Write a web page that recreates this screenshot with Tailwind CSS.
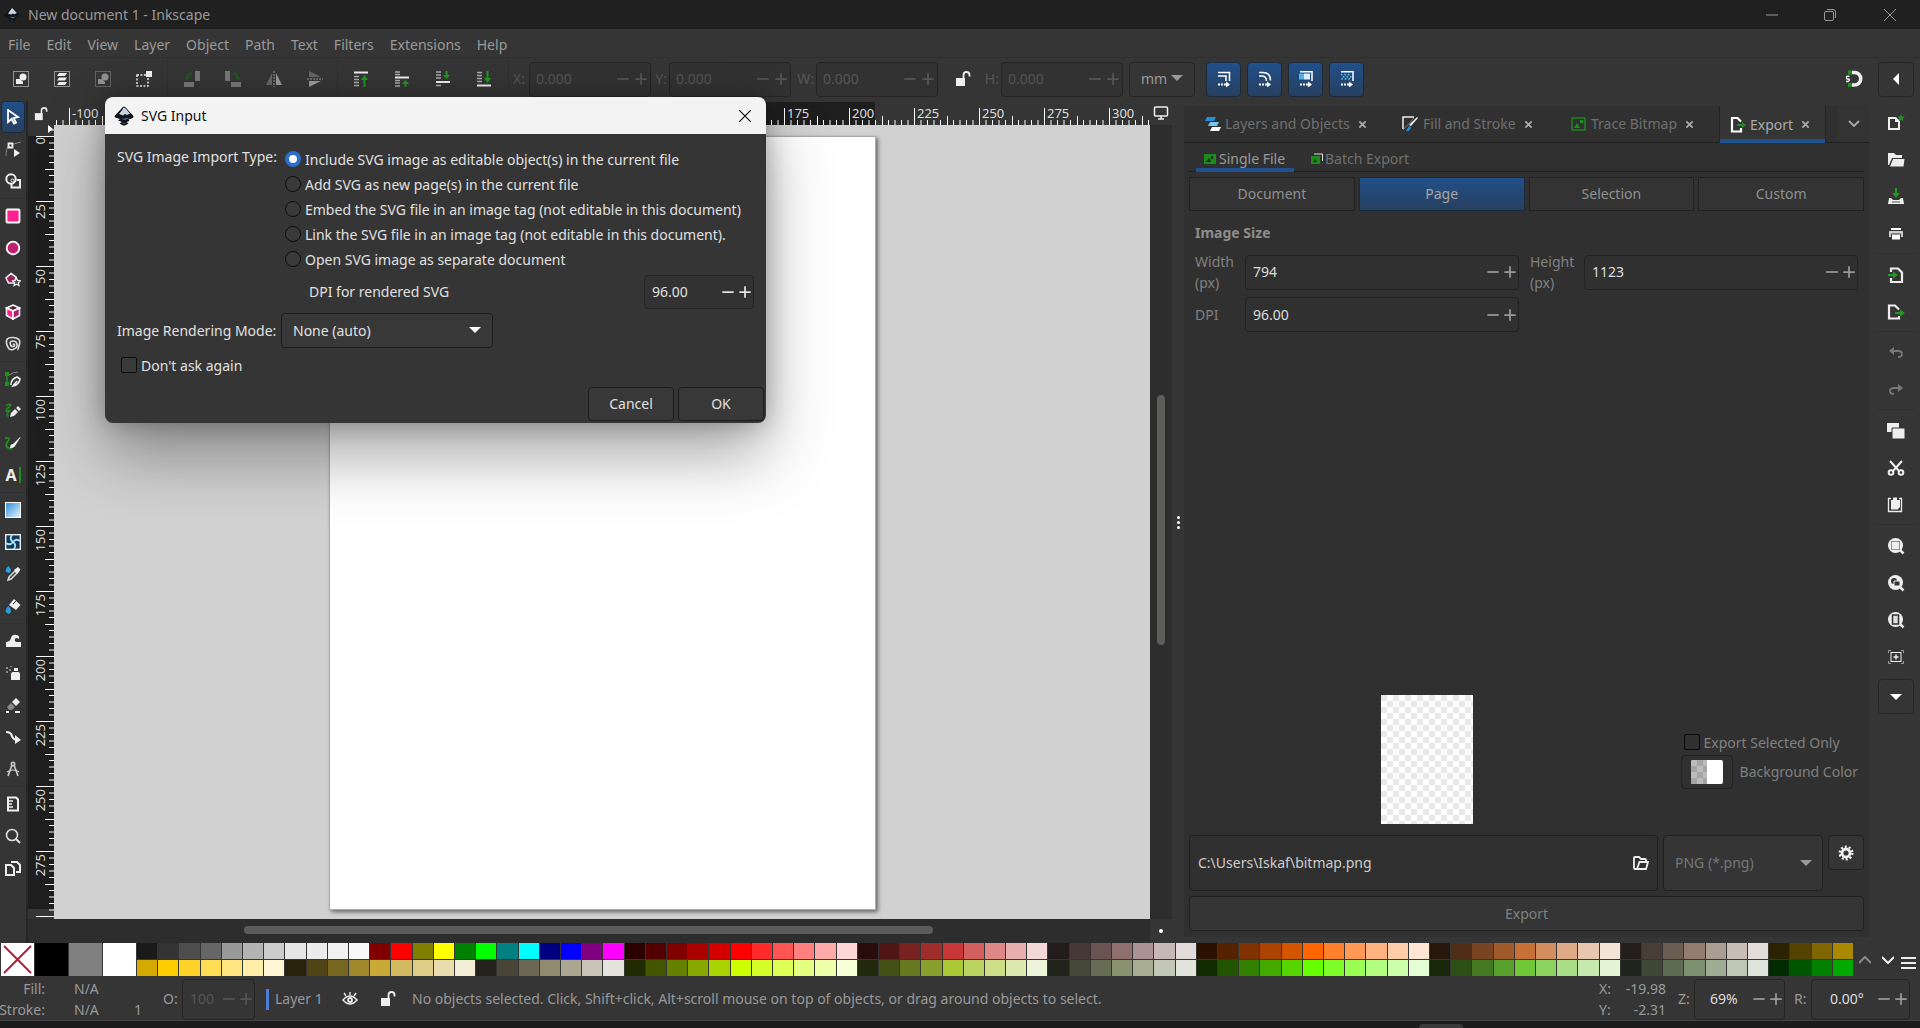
<!DOCTYPE html>
<html lang="en">
<head>
    <meta charset="UTF-8">
    <meta name="viewport" content="width=device-width, initial-scale=1.0">
    <title>New document 1 - Inkscape</title>
    <script src="https://cdn.jsdelivr.net/npm/@tailwindcss/browser@4"></script>
</head>
<body class="relative flex flex-col h-screen overflow-hidden bg-[#353535] text-[#999] font-['Noto_Sans','Open_Sans',sans-serif] text-sm leading-5">

    <!-- Shared icon shapes -->
    <svg class="hidden">
        <symbol id="minus" viewBox="0 0 16 16"><path d="M1.500 8h13" stroke="currentColor" stroke-width="2"/></symbol>
        <symbol id="plus" viewBox="0 0 16 16"><path d="M1.500 8h13M8 1.500v13" stroke="currentColor" stroke-width="2"/></symbol>
        <symbol id="caret" viewBox="0 0 12 8"><path d="M0 1h12L6 7z" fill="currentColor"/></symbol>
        <symbol id="close" viewBox="0 0 10 10"><path d="M1.500 1.500l7 7M8.500 1.500l-7 7" stroke="currentColor" stroke-width="2"/></symbol>
        <symbol id="unlock" viewBox="0 0 16 16"><path d="M1 7h9v8H1z" fill="#eee"/><path d="M8.500 8V4q0-3 3-3t3 3v1.500" fill="none" stroke="#eee" stroke-width="1.800"/></symbol>
        <symbol id="logo" viewBox="0 0 20 20">
            <path d="M10 0.500Q11.500 .8 13 3l6 6.500q1.500 2-1.500 3l-3 1 1 1.500-3 1 2 1.500-3.500 2H9l-3.500-2L8 16l-4-1.500L6 13l-3.500-1Q-.5 11 1 9.500L7.500 2.500Q9 .5 10 .5z" fill="#10141b"/>
            <path d="M10 1.500q1 0 2 1.500l4 4.500-3 1.500-2-1-2 1.500-4-1.500 3.500-4.500Q9 1.500 10 1.500z" fill="#c9d3df"/>
            <path d="M3 11q6 3 13 .5l-5 2.500z" fill="#5b7ba5"/>
            <path d="M7 16.500q3 1.500 6 0l-3 1.500z" fill="#5b7ba5"/>
        </symbol>
        <symbol id="lens" viewBox="0 0 18 18"><circle cx="8.500" cy="8.500" r="7.500" fill="#eee"/><path d="M13 13l3.500 3.500" stroke="#eee" stroke-width="2.500"/></symbol>
    </svg>

    <!-- Title bar -->
    <header class="flex items-center h-[29px] shrink-0 bg-[#202020] pl-1">
        <svg class="w-4 h-5"><use href="#logo"/></svg>
        <h1 class="ml-2 flex-1">New document 1 - Inkscape</h1>
        <button aria-label="Minimize" class="w-[58px] h-7 flex items-center justify-center"><svg class="w-3 h-3" viewBox="0 0 12 12"><path d="M0 6h12" stroke="#999"/></svg></button>
        <button aria-label="Restore" class="w-[58px] h-7 flex items-center justify-center"><svg class="w-3 h-3" viewBox="0 0 12 12" fill="none" stroke="#999"><rect x=".5" y="2.500" width="9" height="9" rx="1.500"/><path d="M3 .5h6q2.500 0 2.500 2.500v6"/></svg></button>
        <button aria-label="Close" class="w-[61px] h-7 flex items-center justify-center"><svg class="w-3 h-3" viewBox="0 0 12 12"><path d="M0 0l12 12M12 0L0 12" stroke="#999"/></svg></button>
    </header>

    <!-- Menu -->
    <nav class="flex items-center gap-4 h-7 shrink-0 px-2 pt-[3px]">
        <a href="#">File</a>
        <a href="#">Edit</a>
        <a href="#">View</a>
        <a href="#">Layer</a>
        <a href="#">Object</a>
        <a href="#">Path</a>
        <a href="#">Text</a>
        <a href="#">Filters</a>
        <a href="#">Extensions</a>
        <a href="#">Help</a>
    </nav>

    <!-- Tool options -->
    <div class="flex items-center h-[45px] shrink-0 border-t border-[#303030] pr-[6px] pb-[2px]">
        <div class="flex items-center h-full border-r border-[#303030] w-[168px]">
            <button aria-label="Select all" class="w-[41px] flex justify-center"><svg class="w-4 h-4" viewBox="0 0 16 16"><rect x=".5" y=".5" width="15" height="15" fill="none" stroke="#eee" stroke-dasharray="1 1"/><circle cx="10" cy="6" r="3.500" fill="#eee"/><path d="M3 8h4l3 3v2H3z" fill="#eee"/></svg></button>
            <button aria-label="Select all in all layers" class="w-[41px] flex justify-center"><svg class="w-4 h-4" viewBox="0 0 16 16"><rect x=".5" y=".5" width="15" height="15" fill="none" stroke="#eee" stroke-dasharray="1 1"/><path d="M5 2h8l-2 3H3zM5 6.500h8l-2 3H3zM5 11h8l-2 3H3z" fill="#eee"/></svg></button>
            <button aria-label="Deselect" class="w-[41px] flex justify-center opacity-50"><svg class="w-4 h-4" viewBox="0 0 16 16"><rect x=".5" y=".5" width="15" height="15" fill="none" stroke="#eee" stroke-dasharray="1 1"/><circle cx="10" cy="6" r="3.500" fill="#eee"/><path d="M3 8h4l3 3v2H3z" fill="#eee"/></svg></button>
            <button aria-label="Rubberband" class="w-[42px] flex justify-center"><svg class="w-4 h-4" viewBox="0 0 16 16"><rect x="1" y="4" width="11" height="11" fill="none" stroke="#eee" stroke-width="1.500" stroke-dasharray="2 1.500"/><path d="M10 0h6v6h-6z" fill="#eee"/></svg></button>
        </div>
        <div class="flex items-center h-full border-r border-[#303030] w-[170px] pl-[3px]">
            <button aria-label="Rotate left" class="w-[41px] flex justify-center"><svg class="w-4 h-4" viewBox="0 0 16 16"><path d="M0 11h10v5H0zM11 0h5v10h-5z" fill="#777"/><path d="M3 8q0-5 5-6" fill="none" stroke="#1c5c1c" stroke-width="2"/><path d="M0 6h6L3 10z" fill="#1c5c1c"/></svg></button>
            <button aria-label="Rotate right" class="w-[41px] flex justify-center"><svg class="w-4 h-4" viewBox="0 0 16 16"><path d="M6 11h10v5H6zM0 0h5v10H0z" fill="#777"/><path d="M13 8q0-5-5-6" fill="none" stroke="#1c5c1c" stroke-width="2"/><path d="M10 6h6l-3 4z" fill="#1c5c1c"/></svg></button>
            <button aria-label="Flip horizontal" class="w-[41px] flex justify-center"><svg class="w-4 h-4" viewBox="0 0 16 16"><path d="M6 2v12H0z" fill="#666"/><path d="M10 2v12h6z" fill="#999"/><path d="M8 0v16" stroke="#999" stroke-dasharray="2 1"/></svg></button>
            <button aria-label="Flip vertical" class="w-[41px] flex justify-center"><svg class="w-4 h-4" viewBox="0 0 16 16"><path d="M2 6h12L2 0z" fill="#666"/><path d="M2 10h12L2 16z" fill="#999"/><path d="M0 8h16" stroke="#999" stroke-dasharray="2 1"/></svg></button>
        </div>
        <div class="flex items-center h-full border-r border-[#303030] w-[171px] pl-[2px]">
            <button aria-label="Raise to top" class="w-[41px] flex justify-center"><svg class="w-4 h-4" viewBox="0 0 16 16"><path d="M1 1.500h14" stroke="#eee" stroke-width="2"/><path d="M1 5.500h5M1 8.500h5M1 11.500h5M1 14.500h5" stroke="#aaa" stroke-width="1.500"/><path d="M11.500 16V8" stroke="#1f9a1f" stroke-width="2"/><path d="M8 9l3.500-5L15 9z" fill="#1f9a1f"/></svg></button>
            <button aria-label="Raise" class="w-[41px] flex justify-center"><svg class="w-4 h-4" viewBox="0 0 16 16"><path d="M1 6.500h14" stroke="#eee" stroke-width="2"/><path d="M1 1h5M1 3.500h5M1 9.500h5M1 12h5M1 15h5" stroke="#aaa" stroke-width="1.500"/><path d="M11.500 16v-4" stroke="#1f9a1f" stroke-width="2"/><path d="M8 13l3.500-4 3.500 4z" fill="#1f9a1f"/></svg></button>
            <button aria-label="Lower" class="w-[41px] flex justify-center"><svg class="w-4 h-4" viewBox="0 0 16 16"><path d="M1 11h14" stroke="#eee" stroke-width="2"/><path d="M1 1h5M1 4h5M1 7h5M1 14.500h5" stroke="#aaa" stroke-width="1.500"/><path d="M11.500 0v5" stroke="#1f9a1f" stroke-width="2"/><path d="M8 4l3.500 4L15 4z" fill="#1f9a1f"/></svg></button>
            <button aria-label="Lower to bottom" class="w-[41px] flex justify-center"><svg class="w-4 h-4" viewBox="0 0 16 16"><path d="M1 14.500h14" stroke="#eee" stroke-width="2"/><path d="M1 1.500h5M1 4.500h5M1 7.500h5M1 10.500h5" stroke="#aaa" stroke-width="1.500"/><path d="M11.500 0v8" stroke="#1f9a1f" stroke-width="2"/><path d="M8 7l3.500 5L15 7z" fill="#1f9a1f"/></svg></button>
        </div>
        <div class="flex items-center text-[#555]">
            <label for="x" class="w-5 text-right pr-1">X:</label>
            <div class="flex items-center w-[122px] h-[35px] rounded border border-[#242424] bg-[#323232]">
                <input id="x" value="0.000" class="w-0 flex-1 pl-[6px] outline-none"><button aria-label="Less" class="w-[18px]"><svg class="w-[14px] h-[14px] mx-auto"><use href="#minus"/></svg></button><button aria-label="More" class="w-[18px]"><svg class="w-[14px] h-[14px] mx-auto"><use href="#plus"/></svg></button>
            </div>
            <label for="y" class="w-[18px] text-right pr-[2px]">Y:</label>
            <div class="flex items-center w-[122px] h-[35px] rounded border border-[#242424] bg-[#323232]">
                <input id="y" value="0.000" class="w-0 flex-1 pl-[6px] outline-none"><button aria-label="Less" class="w-[18px]"><svg class="w-[14px] h-[14px] mx-auto"><use href="#minus"/></svg></button><button aria-label="More" class="w-[18px]"><svg class="w-[14px] h-[14px] mx-auto"><use href="#plus"/></svg></button>
            </div>
            <label for="w" class="w-[25px] text-right pr-[2px]">W:</label>
            <div class="flex items-center w-[122px] h-[35px] rounded border border-[#242424] bg-[#323232]">
                <input id="w" value="0.000" class="w-0 flex-1 pl-[6px] outline-none"><button aria-label="Less" class="w-[18px]"><svg class="w-[14px] h-[14px] mx-auto"><use href="#minus"/></svg></button><button aria-label="More" class="w-[18px]"><svg class="w-[14px] h-[14px] mx-auto"><use href="#plus"/></svg></button>
            </div>
            <button aria-label="Lock ratio" class="w-[46px] pl-1"><svg class="w-4 h-4 mx-auto"><use href="#unlock"/></svg></button>
            <label for="h" class="w-[17px] text-right pr-[2px]">H:</label>
            <div class="flex items-center w-[122px] h-[35px] rounded border border-[#242424] bg-[#323232]">
                <input id="h" value="0.000" class="w-0 flex-1 pl-[6px] outline-none"><button aria-label="Less" class="w-[18px]"><svg class="w-[14px] h-[14px] mx-auto"><use href="#minus"/></svg></button><button aria-label="More" class="w-[18px]"><svg class="w-[14px] h-[14px] mx-auto"><use href="#plus"/></svg></button>
            </div>
        </div>
        <div class="relative ml-[6px] mr-[11px] text-[#999]">
            <select aria-label="Unit" class="appearance-none w-[66px] h-[35px] rounded border border-[#242424] bg-[#353535] pl-[11px]"><option>mm</option></select>
            <svg class="absolute right-3 top-3 w-3 h-2"><use href="#caret"/></svg>
        </div>
        <div class="flex gap-[6px]">
            <button aria-label="Scale stroke width" class="w-[35px] h-[35px] rounded border border-[#1c2a3d] bg-gradient-to-b from-[#204f8a] to-[#27405f] flex items-center justify-center"><svg class="w-4 h-4" viewBox="0 0 16 16"><path d="M2 1.500h11.500V10M2 5h8v5" fill="none" stroke="#fff" stroke-width="1.500"/><path d="M2 13.500h8" stroke="#fff" stroke-width="2" stroke-dasharray="2 1"/><path d="M10 10.500l4 3-4 3z" fill="#fff"/></svg></button>
            <button aria-label="Scale corners" class="w-[35px] h-[35px] rounded border border-[#1c2a3d] bg-gradient-to-b from-[#204f8a] to-[#27405f] flex items-center justify-center"><svg class="w-4 h-4" viewBox="0 0 16 16"><path d="M2 1.500h4q7.500 0 7.500 8M2 5h2.500q5 0 5 5" fill="none" stroke="#fff" stroke-width="1.500"/><path d="M2 13.500h8" stroke="#fff" stroke-width="2" stroke-dasharray="2 1"/><path d="M10 10.500l4 3-4 3z" fill="#fff"/></svg></button>
            <button aria-label="Move gradients" class="w-[35px] h-[35px] rounded border border-[#1c2a3d] bg-gradient-to-b from-[#204f8a] to-[#27405f] flex items-center justify-center"><svg class="w-4 h-4" viewBox="0 0 16 16"><path d="M2 .8h12V10" fill="none" stroke="#fff" stroke-width="1.500"/><path d="M1 2.500h5v6H1z" fill="#4db3ea"/><path d="M6 2.500h6v6H6z" fill="#d8eefa"/><path d="M2 13.500h8" stroke="#fff" stroke-width="2" stroke-dasharray="2 1"/><path d="M10 10.500l4 3-4 3z" fill="#fff"/></svg></button>
            <button aria-label="Move patterns" class="w-[35px] h-[35px] rounded border border-[#1c2a3d] bg-gradient-to-b from-[#204f8a] to-[#27405f] flex items-center justify-center"><svg class="w-4 h-4" viewBox="0 0 16 16"><path d="M2 .8h12V10" fill="none" stroke="#fff" stroke-width="1.500"/><path d="M2 3l3 3-3 3M5.500 3l3 3-3 3M9 3l3 3-3 3" fill="none" stroke="#5bc0f0" stroke-width="1.300" stroke-dasharray="2 1"/><path d="M2 13.500h8" stroke="#fff" stroke-width="2" stroke-dasharray="2 1"/><path d="M10 10.500l4 3-4 3z" fill="#fff"/></svg></button>
        </div>
        <button aria-label="Snapping" class="ml-auto mr-[14px]"><svg class="w-5 h-5" viewBox="0 0 20 20"><path d="M8 3.500h2.500a6 6 0 010 12.500H8" fill="none" stroke="#eee" stroke-width="3.500"/><path d="M4 1.500h4v4H4zM4 14h4v4H4z" fill="#1f8f1f"/><path d="M5.500 7.500q-3-1-3 1t2 1.500q2 1-.5 2.500H2" fill="none" stroke="#eee" stroke-width="1.400"/></svg></button>
        <button aria-label="Show snap options" class="w-9 h-[35px] rounded border border-[#242424] flex items-center justify-center"><svg class="w-2 h-3" viewBox="0 0 8 12"><path d="M7 0v12L1 6z" fill="#fff"/></svg></button>
    </div>

    <main class="flex flex-1 min-h-0">
        <!-- Toolbox -->
        <aside class="flex flex-col w-7 shrink-0 -mt-px pl-px border-r-2 border-[#262626] *:shrink-0">
            <button aria-label="Selector" class="h-8 w-6 flex items-center justify-center rounded border border-[#1c2a3d] bg-gradient-to-b from-[#204f8a] to-[#27405f]"><svg class="w-4 h-4" viewBox="0 0 16 16"><path d="M3 1l10 7-4.500 1 2.500 4.500-2 1-2.500-4.500L3 13z" fill="none" stroke="#fff" stroke-width="1.800"/></svg></button>
            <button aria-label="Node" class="h-8 w-6 flex items-center justify-center"><svg class="w-4 h-4" viewBox="0 0 16 16"><path d="M1 15Q1 7 4 4.500M7 3.500L16 1" fill="none" stroke="#888"/><path d="M3.500 2.500h4v4h-4z" fill="#353535" stroke="#eee" stroke-width="1.800"/><path d="M9 8l6 4-6 4z" fill="#eee"/></svg></button>
            <button aria-label="Shape builder" class="h-8 w-6 flex items-center justify-center"><svg class="w-4 h-4" viewBox="0 0 16 16" fill="none" stroke="#eee" stroke-width="2"><circle cx="6" cy="6" r="4.700"/><path d="M11.500 7H15v7.500H6.500V11"/><circle cx="7.500" cy="7.500" r="1.500" stroke-width="1"/></svg></button>
            <hr class="my-px border-[#303030]">
            <button aria-label="Rectangle" class="h-8 w-6 flex items-center justify-center"><svg class="w-4 h-4" viewBox="0 0 16 16"><rect x="1.500" y="1.500" width="13" height="13" rx="1" fill="#ff2090" stroke="#fff" stroke-width="1.800"/></svg></button>
            <button aria-label="Ellipse" class="h-8 w-6 flex items-center justify-center"><svg class="w-4 h-4" viewBox="0 0 16 16"><circle cx="8" cy="8" r="6.300" fill="#c02070" stroke="#fff" stroke-width="1.800"/></svg></button>
            <button aria-label="Star" class="h-8 w-6 flex items-center justify-center"><svg class="w-4 h-4" viewBox="0 0 16 16" stroke="#eee" stroke-width="1.600"><path d="M6 1.500l5 3.500-1.500 6H3.500L1 6z" fill="#9a1f5e"/><path d="M11.500 6l1.200 2.500 2.600.4-1.900 1.900.5 2.700-2.400-1.300-2.400 1.300.5-2.700-1.900-1.900 2.600-.4z" fill="#444" stroke-width="1.300"/></svg></button>
            <button aria-label="3D box" class="h-8 w-6 flex items-center justify-center"><svg class="w-4 h-4" viewBox="0 0 16 16" stroke="#fff" stroke-width="1.500"><path d="M8 1l6.500 3L8 7 1.500 4z" fill="#5a2040"/><path d="M1.500 4L8 7v8l-6.500-3.500z" fill="#ff2090"/><path d="M14.500 4L8 7v8l6.500-3.500z" fill="#b02070"/></svg></button>
            <button aria-label="Spiral" class="h-8 w-6 flex items-center justify-center"><svg class="w-4 h-4" viewBox="0 0 16 16"><path d="M8 8.500q1-1 1.500.3T8 10.500 5.300 8 8 5t4 3.500-4 5-6.300-5.500T8 1.500t6.500 6.500-2 6" fill="none" stroke="#ddd" stroke-width="1.600"/></svg></button>
            <hr class="my-px border-[#303030]">
            <button aria-label="Pen" class="h-8 w-6 flex items-center justify-center"><svg class="w-4 h-4" viewBox="0 0 16 16"><path d="M2 3v11" stroke="#1f8f1f" stroke-width="1.500"/><path d="M0 1h4v4H0zM0 11h4v4H0z" fill="#1f8f1f"/><path d="M4 4q4-3 9-3" fill="none" stroke="#888"/><path d="M6 14q0-6 6-8l3 2q-1 6-7 7l4-5" fill="none" stroke="#eee" stroke-width="1.600"/></svg></button>
            <button aria-label="Pencil" class="h-8 w-6 flex items-center justify-center"><svg class="w-4 h-4" viewBox="0 0 16 16"><path d="M1 3q3-3 5-1L2 6q-2 3 1 2l2-1-3 4q-1 2 2 2" fill="none" stroke="#1f8f1f" stroke-width="1.400"/><path d="M5 14l1-4 4-4 3 3-4 4zM11 5l2-2 3 3-2 2z" fill="#eee"/></svg></button>
            <button aria-label="Calligraphy" class="h-8 w-6 flex items-center justify-center"><svg class="w-4 h-4" viewBox="0 0 16 16"><path d="M0 3q6-1 3 3t-1 6 5 2" fill="none" stroke="#1f8f1f" stroke-width="1.800"/><path d="M5 13q0-4 3-4l7-7 .5.5L10 11q-1 2-5 2z" fill="#eee"/></svg></button>
            <button aria-label="Text" class="h-8 w-6 flex items-center justify-center text-base font-bold text-[#eee]">A<span class="ml-[2px] w-[2px] h-4 bg-[#1f8f1f]"></span></button>
            <hr class="my-px border-[#303030]">
            <button aria-label="Gradient" class="h-8 w-6 flex items-center justify-center"><span class="w-4 h-4 border border-white bg-gradient-to-br from-[#2090d8] to-[#e0f2fc]"></span></button>
            <button aria-label="Mesh" class="h-8 w-6 flex items-center justify-center"><svg class="w-4 h-4" viewBox="0 0 16 16"><rect x=".7" y=".7" width="14.600" height="14.600" fill="#123a58" stroke="#eee" stroke-width="1.400"/><path d="M8 8Q4 5 7 1M8 8q4 3 1 7M8 8Q5 12 1 9M8 8q3-4 7-1" fill="none" stroke="#a8e0ff" stroke-width="1.800"/></svg></button>
            <button aria-label="Dropper" class="h-8 w-6 flex items-center justify-center"><svg class="w-4 h-4" viewBox="0 0 16 16"><path d="M3.500 0Q7 4 5.500 6t-4 0T3.500 0z" fill="#2a9fe0"/><path d="M3 14l1-3 6-6 2 2-6 6z" fill="none" stroke="#ddd" stroke-width="1.500"/><path d="M9 4l4-3 2.500 2.500L12.500 8z" fill="#eee"/></svg></button>
            <button aria-label="Bucket" class="h-8 w-6 flex items-center justify-center"><svg class="w-4 h-4" viewBox="0 0 16 16"><path d="M3.500 8Q7 12 5.500 14.500t-4 0T3.500 8z" fill="#2a9fe0"/><path d="M9 1l6.500 6L11 12 4 7z" fill="#eee"/><path d="M8 6l3-3" stroke="#353535"/></svg></button>
            <hr class="my-px border-[#303030]">
            <button aria-label="Tweak" class="h-8 w-6 flex items-center justify-center"><svg class="w-4 h-4" viewBox="0 0 16 16"><path d="M1 14V9q4 0 5-4t6-3q3 1 2 4-3-2-4 0t1 3h5v5z" fill="#eee"/></svg></button>
            <button aria-label="Spray" class="h-8 w-6 flex items-center justify-center"><svg class="w-4 h-4" viewBox="0 0 16 16"><path d="M6 9q0-2 2-2h5q2 0 2 2v6H6zM9 3h4v3H9z" fill="#eee"/><path d="M1 2h2v2H1zM4 4h2v2H4zM1 6h2v2H1zM5 1h2v1H5z" fill="#888"/></svg></button>
            <button aria-label="Eraser" class="h-8 w-6 flex items-center justify-center"><svg class="w-4 h-4" viewBox="0 0 16 16"><path d="M7 5l4-4 4 4-4 4z" fill="#eee"/><path d="M6 6l4 4-3 3H4L2 10z" fill="#888"/><path d="M1 15h3M10 15h5" stroke="#eee" stroke-width="2"/></svg></button>
            <button aria-label="Connector" class="h-8 w-6 flex items-center justify-center"><svg class="w-4 h-4" viewBox="0 0 16 16"><path d="M1 3q5 0 6 4t6 4" fill="none" stroke="#eee" stroke-width="2.200"/><path d="M10 6l6 5-6 4z" fill="#eee"/></svg></button>
            <button aria-label="LPE" class="h-8 w-6 flex items-center justify-center"><svg class="w-4 h-4" viewBox="0 0 16 16" fill="none" stroke="#ccc" stroke-width="1.600"><path d="M7 4L3 15M9 4l4 11"/><circle cx="8" cy="3" r="1.700"/><path d="M2 11q6-4 12 0" stroke-width="1.200"/></svg></button>
            <hr class="my-px border-[#303030]">
            <button aria-label="Measure" class="h-8 w-6 flex items-center justify-center"><svg class="w-4 h-4" viewBox="0 0 16 16"><path d="M3 1.500h8l2 2v11H3z" fill="none" stroke="#eee" stroke-width="2"/><path d="M4 5h4M4 8h3M4 11h4" stroke="#eee" stroke-width="1.500"/></svg></button>
            <button aria-label="Zoom" class="h-8 w-6 flex items-center justify-center"><svg class="w-4 h-4" viewBox="0 0 16 16" fill="none" stroke="#ddd"><circle cx="7" cy="7" r="5.500" stroke-width="1.600"/><path d="M11 11l4 4" stroke-width="2.200"/></svg></button>
            <button aria-label="Pages" class="h-8 w-6 flex items-center justify-center"><svg class="w-4 h-4" viewBox="0 0 16 16" fill="none" stroke="#eee" stroke-width="2"><path d="M1 5h5l3 3v7H1z"/><path d="M6 2h6l3 3v7h-4"/></svg></button>
        </aside>

        <!-- Left ruler -->
        <div class="w-[26px] shrink-0 flex flex-col">
            <button aria-label="Lock guides" class="h-[23px] shrink-0"><svg class="w-[14px] h-[14px] mx-auto"><use href="#unlock"/></svg></button>
            <svg class="w-full flex-1 min-h-0 max-h-[794px]" font-size="13" fill="#ddd" text-anchor="end">
                <defs>
                    <pattern id="vticks" y="11" width="26" height="65" patternUnits="userSpaceOnUse">
                        <path d="M8 .5h18M17 33.500h9M21 7h5M21 13.500h5M21 20h5M21 26.500h5M21 39.500h5M21 46h5M21 52.500h5M21 59h5" stroke="#fff"/>
                    </pattern>
                </defs>
                <rect y="11" width="26" height="773" fill="#1e1e1e"/>
                <rect width="26" height="794" fill="url(#vticks)"/>
                <path d="M20 0l5 4-5 4z" fill="#fff"/>
                <text transform="translate(17 12) rotate(-90)">0</text>
                <text transform="translate(17 79) rotate(-90)">25</text>
                <text transform="translate(17 144) rotate(-90)">50</text>
                <text transform="translate(17 209) rotate(-90)">75</text>
                <text transform="translate(17 274) rotate(-90)">100</text>
                <text transform="translate(17 339) rotate(-90)">125</text>
                <text transform="translate(17 404) rotate(-90)">150</text>
                <text transform="translate(17 469) rotate(-90)">175</text>
                <text transform="translate(17 534) rotate(-90)">200</text>
                <text transform="translate(17 599) rotate(-90)">225</text>
                <text transform="translate(17 664) rotate(-90)">250</text>
                <text transform="translate(17 729) rotate(-90)">275</text>
            </svg>
            <div class="h-6 shrink-0 bg-[#2d2d2d]"></div>
        </div>

        <!-- Canvas -->
        <section class="flex-1 min-w-0 flex flex-col">
            <svg class="w-full h-[23px] shrink-0" font-size="13" fill="#ddd">
                <defs>
                    <pattern id="hticks" x="15" width="65" height="23" patternUnits="userSpaceOnUse">
                        <path d="M.5 6v17M33.500 14v9M7 18v5M13.500 18v5M20 18v5M26.500 18v5M39.500 18v5M46 18v5M52.500 18v5M59 18v5" stroke="#fff"/>
                    </pattern>
                </defs>
                <rect x="275" width="546" height="23" fill="#1e1e1e"/>
                <rect width="100%" height="23" fill="url(#hticks)"/>
                <text x="18" y="16">-100</text>
                <text x="733" y="16">175</text>
                <text x="798" y="16">200</text>
                <text x="863" y="16">225</text>
                <text x="928" y="16">250</text>
                <text x="993" y="16">275</text>
                <text x="1058" y="16">300</text>
            </svg>
            <div class="relative flex-1 min-h-0 overflow-hidden bg-[#d1d1d1]">
                <div class="absolute left-[275px] top-[11px] w-[547px] h-[774px] bg-white border border-[#aaa] shadow-[2px_2px_4px_rgba(0,0,0,0.5)]"></div>
            </div>
            <div class="h-6 shrink-0 bg-[#2d2d2d] pt-[7px] pl-[190px]"><div class="w-[689px] h-2 rounded-full bg-[#5c5c5a]"></div></div>
        </section>

        <!-- Vertical scrollbar -->
        <div class="w-[22px] shrink-0 flex flex-col items-center">
            <button aria-label="Color managed view" class="h-[23px] shrink-0"><svg class="w-4 h-4" viewBox="0 0 16 16"><rect x="1.500" y="1" width="13" height="9" rx="1" fill="none" stroke="#eee" stroke-width="1.500"/><path d="M8 10v3M5 13h6" stroke="#eee" stroke-width="1.500"/></svg></button>
            <div class="flex-1 w-full bg-[#2d2d2d] pt-[270px]"><div class="w-2 h-[250px] mx-auto rounded-full bg-[#5c5c5a]"></div></div>
            <div class="h-6 flex items-center"><span class="w-1 h-1 rounded-full bg-white"></span></div>
        </div>
        <div class="w-3 shrink-0 flex flex-col items-center justify-center gap-[2px]">
            <span class="w-[3px] h-[3px] rounded-full bg-white"></span>
            <span class="w-[3px] h-[3px] rounded-full bg-white"></span>
            <span class="w-[3px] h-[3px] rounded-full bg-white"></span>
        </div>

        <!-- Export dialog -->
        <section class="w-[685px] shrink-0 mt-1 mb-[6px] bg-[#303030] flex flex-col">
            <div class="flex h-[37px] shrink-0 border-b border-[#202020] text-[#6f6f6f]">
                <button class="flex items-center w-[197px] pl-5"><svg class="w-[18px] h-4 mr-[3px]" viewBox="0 0 18 16"><path d="M3 1h9l-2 4H1z" fill="#1e90d8"/><path d="M6 6h9l-2 4H4z" fill="#7cc4ee"/><path d="M8 11h9l-2 4H6z" fill="#fff"/></svg>Layers and Objects<svg class="w-[9px] h-[9px] ml-2 text-[#aaa]"><use href="#close"/></svg></button>
                <button class="flex items-center w-[168px] pl-5"><svg class="w-[18px] h-4 mr-1" viewBox="0 0 18 16"><path d="M13 1H2v12" fill="none" stroke="#eee" stroke-width="1.500"/><path d="M2 14L13 2" stroke="#777"/><path d="M16 1l1 1-7 8-2-1z" fill="#eee"/><path d="M8 10l2 1q-1 5-5 4z" fill="#1e90d8"/></svg>Fill and Stroke<svg class="w-[9px] h-[9px] ml-2 text-[#aaa]"><use href="#close"/></svg></button>
                <button class="flex items-center w-[170px] pl-[22px]"><svg class="w-4 h-4 mr-1" viewBox="0 0 16 16"><rect x="1" y="2" width="13" height="12" fill="none" stroke="#1f8f1f" stroke-width="1.300"/><path d="M3 12l3-5 3 5zM9 4h3v3H9z" fill="#1f8f1f"/></svg>Trace Bitmap<svg class="w-[9px] h-[9px] ml-2 text-[#aaa]"><use href="#close"/></svg></button>
                <button class="flex items-center w-[107px] pl-[9px] h-[37px] bg-[#353535] border-x border-[#242424] shadow-[inset_0_-4px_0_#1f5090] text-[#aaa] shrink-0"><svg class="w-[18px] h-[18px] mr-[3px]" viewBox="0 0 18 18"><path d="M12 12v3.500H3V2h5.500L12 5.500" fill="none" stroke="#fff" stroke-width="2.200"/><path d="M8 9h6" stroke="#1f8f1f" stroke-width="2"/><path d="M13 6l4 3-4 3z" fill="#1f8f1f"/></svg>Export<svg class="w-[9px] h-[9px] ml-2"><use href="#close"/></svg></button>
                <button aria-label="More tabs" class="flex items-center justify-center w-[31px] ml-auto bg-[#333]"><svg class="w-3 h-2" viewBox="0 0 12 8"><path d="M1 1l5 5 5-5" fill="none" stroke="#aaa" stroke-width="1.800"/></svg></button>
            </div>
            <div class="flex h-[29px] shrink-0 mx-[5px] px-[7px] border-b border-[#202020] text-[#6f6f6f]">
                <button class="flex items-center w-[98px] h-[29px] pt-[3px] px-2 shadow-[inset_0_-4px_0_#1f5090] text-[#999] whitespace-nowrap"><svg class="w-3 h-[10px] mr-[3px] shrink-0" viewBox="0 0 12 10"><path d="M0 0h12v10H0z" fill="#1b8c1b"/><path d="M2 8l3-4 2 4zM7 2h2v3H7z" fill="#222"/></svg>Single File</button>
                <button class="flex items-center pt-[3px] ml-[17px] whitespace-nowrap"><svg class="w-3 h-3 mr-[2px] shrink-0" viewBox="0 0 12 12"><path d="M3 1h8.500v7" fill="none" stroke="#ddd"/><path d="M0 3h9v8H0z" fill="#1b8c1b"/><path d="M2 9l2-3 2 3z" fill="#222"/></svg>Batch Export</button>
            </div>
            <div class="grid grid-cols-4 gap-1 mx-[5px] mt-[5px] shrink-0 text-[#909090]">
                <button class="h-[34px] border border-[#222] bg-[#333]">Document</button>
                <button class="h-[34px] border border-[#1c2a3d] bg-gradient-to-b from-[#204f8a] to-[#27405f] text-[#a5a5a5]">Page</button>
                <button class="h-[34px] border border-[#222] bg-[#333]">Selection</button>
                <button class="h-[34px] border border-[#222] bg-[#333]">Custom</button>
            </div>
            <h2 class="mt-3 ml-[11px] font-bold text-[#8c8c8c]">Image Size</h2>
            <div class="grid grid-cols-[50px_274px_54px_274px] items-center gap-y-1 mt-2 ml-[11px] text-[#808080]">
                <label for="width" class="leading-[21px] pr-2">Width (px)</label>
                <div class="flex items-center h-[35px] rounded border border-[#222] text-[#999]">
                    <input id="width" value="794" class="w-0 flex-1 pl-[7px] outline-none text-[#ddd]"><button aria-label="Less" class="w-[17px]"><svg class="w-[14px] h-[14px] mx-auto"><use href="#minus"/></svg></button><button aria-label="More" class="w-[17px]"><svg class="w-[14px] h-[14px] mx-auto"><use href="#plus"/></svg></button>
                </div>
                <label for="height" class="leading-[21px] pl-[11px]">Height (px)</label>
                <div class="flex items-center h-[35px] rounded border border-[#222] text-[#999] ml-[11px] -mr-[11px]">
                    <input id="height" value="1123" class="w-0 flex-1 pl-[7px] outline-none text-[#ddd]"><button aria-label="Less" class="w-[17px]"><svg class="w-[14px] h-[14px] mx-auto"><use href="#minus"/></svg></button><button aria-label="More" class="w-[17px]"><svg class="w-[14px] h-[14px] mx-auto"><use href="#plus"/></svg></button>
                </div>
                <label for="dpi">DPI</label>
                <div class="flex items-center h-[35px] rounded border border-[#222] text-[#999]">
                    <input id="dpi" value="96.00" class="w-0 flex-1 pl-[7px] outline-none text-[#ddd]"><button aria-label="Less" class="w-[17px]"><svg class="w-[14px] h-[14px] mx-auto"><use href="#minus"/></svg></button><button aria-label="More" class="w-[17px]"><svg class="w-[14px] h-[14px] mx-auto"><use href="#plus"/></svg></button>
                </div>
            </div>
            <div class="flex mt-auto mb-[11px] pl-[197px] pr-[11px]">
                <svg class="w-[92px] h-[129px] bg-white"><defs><pattern id="checks" width="12" height="12" patternUnits="userSpaceOnUse"><path d="M0 0h6v6H0zM6 6h6v6H6z" fill="#e9e9e9"/></pattern></defs><rect width="92" height="129" fill="url(#checks)"/></svg>
                <div class="ml-auto mt-9 text-[#808080]">
                    <label class="flex items-center gap-1 pl-[3px] h-6"><input type="checkbox" class="appearance-none w-4 h-4 mb-[2px] rounded-xs border border-[#080808] bg-[#303030]">Export Selected Only</label>
                    <div class="flex items-center gap-[7px]">
                        <button id="bg" class="w-[52px] h-[34px] rounded border border-[#222] flex items-center justify-center"><svg class="w-8 h-6 rounded-xs bg-white" viewBox="0 0 32 24"><path d="M0 0h16v24H0z" fill="#bbb"/><path d="M6 0h6v6H6zM0 6h6v6H0zM12 6h4v6h-4zM6 12h6v6H6zM0 18h6v6H0zM12 18h4v6h-4z" fill="#a5a5a5"/></svg></button>
                        <label for="bg">Background Color</label>
                    </div>
                </div>
            </div>
            <div class="flex gap-[5px] mx-[5px] items-start">
                <div class="flex-1 flex items-center h-14 rounded border border-[#202020] pr-2">
                    <input aria-label="File name" value="C:\Users\Iskaf\bitmap.png" class="flex-1 pl-2 outline-none text-[#ccc]">
                    <button aria-label="Browse"><svg class="w-4 h-4" viewBox="0 0 16 16" fill="none" stroke="#eee" stroke-width="1.800"><path d="M4 14H2q-1 0-1-1V3q0-1 1-1h4l2 2h4q1 0 1 1v2M4 14l2.500-7H15l-2 7z"/></svg></button>
                </div>
                <div class="relative text-[#777]">
                    <select aria-label="Format" class="appearance-none w-[160px] h-14 rounded border border-[#202020] bg-[#353535] pl-[11px]"><option>PNG (*.png)</option></select>
                    <svg class="absolute right-[11px] top-6 w-3 h-2 text-[#999]"><use href="#caret"/></svg>
                </div>
                <button aria-label="Export settings" class="w-9 h-[35px] rounded border border-[#222] bg-[#353535] flex items-center justify-center"><svg class="w-4 h-4" viewBox="0 0 16 16"><circle cx="8" cy="8" r="4" fill="none" stroke="#eee" stroke-width="2.800"/><circle cx="8" cy="8" r="6.300" fill="none" stroke="#eee" stroke-width="2.400" stroke-dasharray="2 1.958"/></svg></button>
            </div>
            <button class="h-[35px] mx-[5px] mt-[5px] mb-[6px] shrink-0 rounded border border-[#202020] bg-[#353535] text-[#808080]">Export</button>
        </section>

        <!-- Commands bar -->
        <aside class="flex flex-col items-center w-[51px] shrink-0 pt-[2px] pl-[2px] *:shrink-0">
            <button aria-label="New" class="h-[37px]"><svg class="w-[18px] h-[18px]" viewBox="0 0 18 18"><path d="M2 4h6.500L12 7.500V15H2z" fill="none" stroke="#eee" stroke-width="2"/><path d="M8 3v5h5z" fill="#eee"/><path d="M14 0l1 2.500 3 .3-2.200 1.700.7 2.500L14 5.500 11.800 7l.7-2.500L10.500 2.800l2.700-.3z" fill="#1f9a1f"/></svg></button>
            <button aria-label="Open" class="h-[37px]"><svg class="w-[18px] h-[18px]" viewBox="0 0 18 18"><path d="M1 2h6l2 2h6v3H5l-3 7H1z" fill="#eee"/><path d="M6 8h11.500l-1 7.500H3z" fill="#eee"/></svg></button>
            <button aria-label="Save" class="h-[37px]"><svg class="w-[18px] h-[18px]" viewBox="0 0 18 18"><path d="M9 0v6" stroke="#1f9a1f" stroke-width="2"/><path d="M5 5h8L9 10z" fill="#1f9a1f"/><path d="M2 10h2l2 2h6l2-2h2l1 6H1z" fill="#eee"/><path d="M5 14h8" stroke="#555"/></svg></button>
            <button aria-label="Print" class="h-[37px]"><svg class="w-[18px] h-[18px]" viewBox="0 0 18 18"><path d="M4 3h10v2H4z" fill="#fff"/><path d="M2 6h14v6H2z" fill="#ccc"/><path d="M4.500 9h9v6h-9z" fill="#fff" stroke="#353535"/></svg></button>
            <hr class="w-10 mt-px mb-[2px] border-[#303030]">
            <button aria-label="Import" class="h-[37px]"><svg class="w-[18px] h-[18px]" viewBox="0 0 18 18"><path d="M4 6V2.500h7l4 4V16H4v-4" fill="none" stroke="#eee" stroke-width="2.200"/><path d="M1 9h6" stroke="#1f9a1f" stroke-width="2"/><path d="M6 5.500l5 3.500-5 3.500z" fill="#1f9a1f"/></svg></button>
            <button aria-label="Export" class="h-[37px]"><svg class="w-[18px] h-[18px]" viewBox="0 0 18 18"><path d="M12 13v2.500H2V2.500h6L12 6.500" fill="none" stroke="#eee" stroke-width="2.200"/><path d="M8 10h6" stroke="#1f9a1f" stroke-width="2"/><path d="M13 6.500l5 3.500-5 3.500z" fill="#1f9a1f"/></svg></button>
            <hr class="w-10 mt-px mb-[2px] border-[#303030]">
            <button aria-label="Undo" class="h-[37px]"><svg class="w-[18px] h-[18px]" viewBox="0 0 18 18"><path d="M5 7h6q4 0 4 3t-4 3" fill="none" stroke="#777" stroke-width="1.800"/><path d="M7 3L2 7l5 4z" fill="#777"/></svg></button>
            <button aria-label="Redo" class="h-[37px]"><svg class="w-[18px] h-[18px]" viewBox="0 0 18 18"><path d="M13 7H7q-4 0-4 3t4 3" fill="none" stroke="#777" stroke-width="1.800"/><path d="M11 3l5 4-5 4z" fill="#777"/></svg></button>
            <hr class="w-10 mt-px mb-[2px] border-[#303030]">
            <button aria-label="Duplicate" class="h-[37px]"><svg class="w-[18px] h-[18px]" viewBox="0 0 18 18"><path d="M0 1h12v9H0z" fill="#eee"/><path d="M5 6h13v11H5z" fill="#eee" stroke="#353535"/></svg></button>
            <button aria-label="Cut" class="h-[37px]"><svg class="w-[18px] h-[18px]" viewBox="0 0 18 18" fill="none" stroke="#eee" stroke-width="2"><path d="M3 2l9 10M15 2L6 12"/><circle cx="4" cy="13.500" r="2.300"/><circle cx="14" cy="13.500" r="2.300"/></svg></button>
            <button aria-label="Paste" class="h-[37px]"><svg class="w-[18px] h-[18px]" viewBox="0 0 18 18"><path d="M4 2.500H1.500v13h13v-13H12" fill="none" stroke="#eee" stroke-width="1.300"/><path d="M4 4h2V1.500h4V4h3v7l-2.500 2.500H4z" fill="#eee"/></svg></button>
            <hr class="w-10 mt-px mb-[2px] border-[#303030]">
            <button aria-label="Zoom selection" class="h-[37px]"><svg class="w-[18px] h-[18px]" viewBox="0 0 18 18"><use href="#lens"/><rect x="4.500" y="4.500" width="8" height="8" fill="none" stroke="#333" stroke-dasharray="1 1"/></svg></button>
            <button aria-label="Zoom drawing" class="h-[37px]"><svg class="w-[18px] h-[18px]" viewBox="0 0 18 18"><use href="#lens"/><circle cx="7" cy="7" r="3" fill="#333"/><path d="M7 7h6v5H7z" fill="#333" stroke="#eee"/></svg></button>
            <button aria-label="Zoom page" class="h-[37px]"><svg class="w-[18px] h-[18px]" viewBox="0 0 18 18"><use href="#lens"/><rect x="5.500" y="4" width="6" height="9" fill="#ddd" stroke="#333" stroke-width="1.500"/></svg></button>
            <button aria-label="Zoom center" class="h-[37px]"><svg class="w-[18px] h-[18px]" viewBox="0 0 18 18" fill="none" stroke="#eee"><rect x="4" y="4.500" width="10" height="9"/><path d="M9 6.500v5M6.500 9h5" stroke-width="1.500"/><path d="M1.500 5V2.500H4M14 2.500h2.500V5M16.500 13v2.500H14M4 15.500H1.500V13" stroke="#999"/></svg></button>
            <button aria-label="More commands" class="mt-1 w-9 h-[35px] rounded border border-[#242424] flex items-center justify-center text-white"><svg class="w-3 h-2"><use href="#caret"/></svg></button>
        </aside>
    </main>

    <!-- Palette -->
    <div class="flex h-[34px] shrink-0 pl-px pb-px">
        <button aria-label="No color" class="w-[33px] mr-px bg-white"><svg class="w-full h-full" viewBox="0 0 33 33"><path d="M3 3l27 27M30 3L3 30" stroke="#b0203a" stroke-width="2"/></svg></button>
        <button aria-label="Black" class="w-[33px] mr-px bg-black"></button>
        <button aria-label="50% gray" class="w-[33px] mr-px bg-[#808080]"></button>
        <button aria-label="White" class="w-[33px] mr-px bg-white"></button>
        <div id="palette" class="flex-1 grid grid-cols-[repeat(81,minmax(0,1fr))] grid-rows-2 gap-px"></div>
        <div class="flex items-center w-[67px]">
            <button aria-label="Up" class="w-[23px]"><svg class="w-3 h-2 mx-auto" viewBox="0 0 12 8"><path d="M0 7l6-6 6 6" fill="none" stroke="#888" stroke-width="2"/></svg></button>
            <button aria-label="Down" class="w-[23px]"><svg class="w-3 h-2 mx-auto" viewBox="0 0 12 8"><path d="M0 1l6 6 6-6" fill="none" stroke="#eee" stroke-width="2"/></svg></button>
            <button aria-label="Palette menu" class="pl-[2px] pt-[6px]"><svg class="w-[15px] h-3" viewBox="0 0 15 12"><path d="M0 1h15M0 6h15M0 11h15" stroke="#eee" stroke-width="2"/></svg></button>
        </div>
    </div>

    <!-- Status bar -->
    <footer class="flex items-center h-[43px] shrink-0 pt-px">
        <dl class="grid grid-cols-[45px_31px_auto] gap-x-[29px] leading-[21px] w-[152px] shrink-0">
            <dt class="text-right">Fill:</dt><dd>N/A</dd><dd></dd>
            <dt class="flex justify-end">Stroke:</dt><dd>N/A</dd><dd>1</dd>
        </dl>
        <label for="opacity" class="w-[30px] shrink-0 pl-[11px]">O:</label>
        <div class="flex items-center w-[73px] h-[41px] shrink-0 rounded border border-[#242424] text-[#555]">
            <input id="opacity" value="100" class="w-0 flex-1 pl-[7px] outline-none"><button aria-label="Less" class="w-[17px]"><svg class="w-[14px] h-[14px] mx-auto"><use href="#minus"/></svg></button><button aria-label="More" class="w-[17px]"><svg class="w-[14px] h-[14px] mx-auto"><use href="#plus"/></svg></button>
        </div>
        <span class="w-[3px] h-[21px] ml-[11px] mr-[6px] shrink-0 bg-[#4a7fd8]"></span>
        <span class="w-[67px] shrink-0">Layer 1</span>
        <button aria-label="Toggle visibility" class="shrink-0"><svg class="w-4 h-4" viewBox="0 0 16 16" fill="none" stroke="#eee"><path d="M1 9q7-8 14 0-7 8-14 0z" stroke-width="1.600"/><circle cx="8" cy="9" r="2" stroke-width="1.800"/><path d="M8 4V1M4 5L2 2M12 5l2-3" stroke-width="1.400"/></svg></button>
        <button aria-label="Toggle lock" class="ml-[22px] shrink-0"><svg class="w-4 h-4"><use href="#unlock"/></svg></button>
        <p class="ml-4 flex-1 whitespace-nowrap">No objects selected. Click, Shift+click, Alt+scroll mouse on top of objects, or drag around objects to select.</p>
        <dl class="grid grid-cols-[20px_47px] leading-[21px] shrink-0">
            <dt>X:</dt><dd class="text-right">-19.98</dd>
            <dt>Y:</dt><dd class="text-right">-2.31</dd>
        </dl>
        <label for="zoom" class="w-7 shrink-0 pl-3">Z:</label>
        <div class="flex items-center w-[91px] h-[41px] shrink-0 rounded border border-[#242424]">
            <input id="zoom" value="69%" class="w-0 flex-1 pl-[15px] outline-none text-[#ddd]"><button aria-label="Less" class="w-[17px]"><svg class="w-[14px] h-[14px] mx-auto"><use href="#minus"/></svg></button><button aria-label="More" class="w-[17px]"><svg class="w-[14px] h-[14px] mx-auto"><use href="#plus"/></svg></button>
        </div>
        <label for="rotation" class="w-[26px] shrink-0 pl-[9px]">R:</label>
        <div class="flex items-center w-[99px] h-[41px] shrink-0 rounded border border-[#242424] mr-[10px]">
            <input id="rotation" value="0.00°" class="w-0 flex-1 pl-[18px] outline-none text-[#ddd]"><button aria-label="Less" class="w-[17px]"><svg class="w-[14px] h-[14px] mx-auto"><use href="#minus"/></svg></button><button aria-label="More" class="w-[17px]"><svg class="w-[14px] h-[14px] mx-auto"><use href="#plus"/></svg></button>
        </div>
    </footer>
    <div class="h-2 shrink-0 bg-[#1c1c1c] border-t border-[#454545] flex justify-end items-end pr-[457px]"><span class="w-11 h-1 rounded-t bg-[#3a3a3a]"></span></div>

    <!-- SVG Input dialog -->
    <form role="dialog" aria-labelledby="dialog-title" class="absolute left-[105px] top-[97px] w-[661px] h-[326px] flex flex-col rounded-lg overflow-hidden bg-[#353535] text-[#e0e0e0] shadow-[0_32px_64px_rgba(0,0,0,0.35),0_0_24px_rgba(0,0,0,0.25)]">
        <div class="flex items-center h-[37px] shrink-0 bg-[#f3f3f3] text-[#111] pl-[9px] pr-[15px]">
            <svg class="w-5 h-5 mr-[7px]"><use href="#logo"/></svg>
            <h2 id="dialog-title" class="flex-1">SVG Input</h2>
            <button type="button" aria-label="Close"><svg class="w-3 h-3" viewBox="0 0 12 12"><path d="M0 0l12 12M12 0L0 12" stroke="#111" stroke-width="1.200"/></svg></button>
        </div>
        <div class="flex pt-[13px] pl-3">
            <span class="w-[168px] whitespace-nowrap">SVG Image Import Type:</span>
            <div role="radiogroup" aria-label="SVG Image Import Type" class="flex flex-col whitespace-nowrap">
                <label class="flex items-center gap-1 h-[25px]"><input type="radio" name="import" checked class="appearance-none w-4 h-4 mb-[2px] rounded-full border border-[#0c0c0c] bg-[#3a3a3a] checked:border-4 checked:border-[#2a6fd0] checked:bg-white">Include SVG image as editable object(s) in the current file</label>
                <label class="flex items-center gap-1 h-[25px]"><input type="radio" name="import" class="appearance-none w-4 h-4 mb-[2px] rounded-full border border-[#0c0c0c] bg-[#3a3a3a]">Add SVG as new page(s) in the current file</label>
                <label class="flex items-center gap-1 h-[25px]"><input type="radio" name="import" class="appearance-none w-4 h-4 mb-[2px] rounded-full border border-[#0c0c0c] bg-[#3a3a3a]">Embed the SVG file in an image tag (not editable in this document)</label>
                <label class="flex items-center gap-1 h-[25px]"><input type="radio" name="import" class="appearance-none w-4 h-4 mb-[2px] rounded-full border border-[#0c0c0c] bg-[#3a3a3a]">Link the SVG file in an image tag (not editable in this document).</label>
                <label class="flex items-center gap-1 h-[25px]"><input type="radio" name="import" class="appearance-none w-4 h-4 mb-[2px] rounded-full border border-[#0c0c0c] bg-[#3a3a3a]">Open SVG image as separate document</label>
            </div>
        </div>
        <div class="flex items-center pl-[204px] pr-3 mt-[3px]">
            <label for="svg-dpi" class="flex-1">DPI for rendered SVG</label>
            <div class="flex items-center w-[110px] h-[34px] rounded border border-[#222] bg-[#323232]">
                <input id="svg-dpi" value="96.00" class="w-0 flex-1 pl-[7px] outline-none"><button type="button" aria-label="Less" class="w-[17px]"><svg class="w-[14px] h-[14px] mx-auto"><use href="#minus"/></svg></button><button type="button" aria-label="More" class="w-[17px]"><svg class="w-[14px] h-[14px] mx-auto"><use href="#plus"/></svg></button>
            </div>
        </div>
        <div class="flex items-center pl-3 mt-1">
            <label for="mode" class="w-[164px] whitespace-nowrap">Image Rendering Mode:</label>
            <div class="relative">
                <select id="mode" class="appearance-none w-[212px] h-[35px] rounded border border-[#1c1c1c] bg-[#383838] pl-[11px]"><option>None (auto)</option></select>
                <svg class="absolute right-3 top-[13px] w-3 h-2 text-white"><use href="#caret"/></svg>
            </div>
        </div>
        <label class="flex items-center gap-1 pl-4 mt-2 h-5"><input type="checkbox" class="appearance-none w-4 h-4 mb-[2px] rounded-xs border border-[#0c0c0c] bg-[#3a3a3a]">Don't ask again</label>
        <div class="flex justify-end gap-1 mt-auto pr-[2px] pb-[2px]">
            <button type="button" class="w-[86px] h-[34px] rounded border border-[#1c1c1c] bg-[#383838]">Cancel</button>
            <button type="submit" class="w-[86px] h-[34px] rounded border border-[#1c1c1c] bg-[#383838]">OK</button>
        </div>
    </form>

    <script>
        const rows = [
            '1a1a1a 333333 4d4d4d 666666 999999 b3b3b3 cccccc e6e6e6 ececec f2f2f2 f9f9f9 800000 ff0000 808000 ffff00 008000 00ff00 008080 00ffff 000080 0000ff 800080 ff00ff 2b0000 550000 800000 aa0000 d40000 ff0000 ff2a2a ff5555 ff8080 ffaaaa ffd5d5 280b0b 501616 782121 a02c2c c83737 d35f5f de8787 e9afaf f4d7d7 241c1c 483737 6c5353 916f6f ac9393 c8b7b7 e3dbdb 2b1100 552200 803300 aa4400 d45500 ff6600 ff7f2a ff9955 ffb380 ffccaa ffe6d5 28170b 502d16 784421 a05a2c c87137 d38d5f deaa87 e9c6af f4e3d7 241f1c 483e37 6c5d53 917c6f ac9d93 c8beb7 e3dedb 2b2200 554400 806600 aa8800',
            'd4aa00 ffcc00 ffd42a ffdd55 ffe680 ffeeaa fff6d5 28220b 504416 786721 a0892c c8ab37 d3bc5f decd87 e9ddaf f4eed7 24221c 484537 6c6753 918a6f aca793 c8c4b7 e3e2db 222b00 445500 668000 88aa00 aad400 ccff00 d4ff2a ddff55 e5ff80 eeffaa f6ffd5 22280b 445016 677821 89a02c abc837 bcd35f cdde87 dde9af eef4d7 22241c 454837 676c53 8a916f a7ac93 c4c8b7 e2e3db 112b00 225500 338000 44aa00 55d400 66ff00 7fff2a 99ff55 b3ff80 ccffaa e5ffd5 17280b 2d5016 447821 5aa02c 71c837 8dd35f aade87 c6e9af e3f4d7 1f241c 3e4837 5d6c53 7c916f 9dac93 bec8b7 dee3db 002b00 005500 008000 00aa00'
        ];
        const palette = document.getElementById('palette');
        rows.join(' ').split(' ').forEach(hex => {
            const swatch = document.createElement('button');
            swatch.setAttribute('aria-label', '#' + hex);
            swatch.style.backgroundColor = '#' + hex;
            palette.appendChild(swatch);
        });
    </script>
</body>
</html>
